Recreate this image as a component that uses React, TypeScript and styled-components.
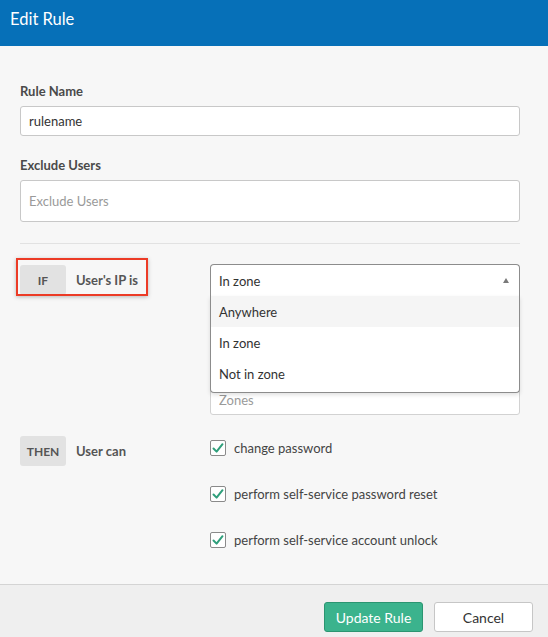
import styled, { createGlobalStyle } from "styled-components";

const GlobalStyle = createGlobalStyle`
  html, body {
    margin: 0;
    padding: 0;
    background: #f7f7f7;
    overflow: hidden;
  }
  * {
    box-sizing: border-box;
  }
  body {
    font-family: Lato, "Liberation Sans", Arial, sans-serif;
    color: #333333;
  }
`;

const options = ["Anywhere", "In zone", "Not in zone"];

const permissions = [
  "change password",
  "perform self-service password reset",
  "perform self-service account unlock",
];

const Check = () => (
  <svg width="12" height="12" viewBox="0 0 12 12">
    <polyline points="1.5,6.5 4.6,9.6 10.5,2.2" fill="none" stroke="#2f9f7b" strokeWidth="2" strokeLinecap="round" strokeLinejoin="round" />
  </svg>
);

export default function App() {
  return (
    <>
      <GlobalStyle />
      <Modal>
        <Header>Edit Rule</Header>
        <Body>
          <Field>
            <Label>Rule Name</Label>
            <TextInput defaultValue="rulename" />
          </Field>
          <Field>
            <Label>Exclude Users</Label>
            <TextInput placeholder="Exclude Users" tall />
          </Field>
          <Divider />

          <RuleRow>
            <Condition>
              <Badge>IF</Badge>
              <ConditionLabel>User's IP is</ConditionLabel>
              <Highlight />
            </Condition>
            <Controls>
              <Select>
                <span>In zone</span>
                <Caret />
                <Menu>
                  {options.map((o, i) => (
                    <Option key={o} active={i === 0}>{o}</Option>
                  ))}
                </Menu>
              </Select>
              <ZonesInput placeholder="Zones" />
            </Controls>
          </RuleRow>

          <RuleRow then>
            <Condition>
              <Badge>THEN</Badge>
              <ConditionLabel>User can</ConditionLabel>
            </Condition>
            <CheckList>
              {permissions.map((p) => (
                <CheckItem key={p}>
                  <Box><Check /></Box>
                  <span>{p}</span>
                </CheckItem>
              ))}
            </CheckList>
          </RuleRow>
        </Body>
        <Footer>
          <PrimaryButton>Update Rule</PrimaryButton>
          <SecondaryButton>Cancel</SecondaryButton>
        </Footer>
      </Modal>
    </>
  );
}

const Modal = styled.div`
  width: 548px;
  min-height: 637px;
  display: flex;
  flex-direction: column;
  background: #f7f7f7;
`;

const Header = styled.div`
  height: 46px;
  background: #0670b8;
  color: #ffffff;
  font-size: 16.5px;
  line-height: 38px;
  padding-left: 10px;
`;

const Body = styled.div`
  flex: 1;
  padding: 37px 28px 29px 20px;
`;

const Field = styled.div`
  display: flex;
  flex-direction: column;
  gap: 7px;
  margin-bottom: 21px;
`;

const Label = styled.label`
  font-size: 13px;
  line-height: 16px;
  font-weight: 700;
  color: #4a4a4a;
`;

const TextInput = styled.input<{ tall?: boolean }>`
  height: ${(p) => (p.tall ? "42px" : "30px")};
  width: 100%;
  border: 1px solid #c8c8c8;
  border-radius: 3px;
  background: #ffffff;
  padding: 0 8px;
  font-family: inherit;
  font-size: 13px;
  color: #333333;
  outline: none;
  &::placeholder {
    color: #9a9a9a;
  }
`;

const Divider = styled.hr`
  border: 0;
  border-top: 1px solid #e2e2e2;
  margin: 0 0 20px;
`;

const RuleRow = styled.div<{ then?: boolean }>`
  display: grid;
  grid-template-columns: 190px 1fr;
  align-items: start;
  margin-bottom: ${(p) => (p.then ? "0" : "20px")};
`;

const Condition = styled.div`
  position: relative;
  display: flex;
  align-items: center;
  gap: 10px;
  margin-top: 1px;
`;

const Badge = styled.span`
  width: 46px;
  height: 30px;
  display: flex;
  align-items: center;
  justify-content: center;
  background: #e2e2e2;
  border-radius: 3px;
  font-size: 12px;
  font-weight: 700;
  color: #555555;
`;

const ConditionLabel = styled.span`
  font-size: 13px;
  font-weight: 700;
  color: #555555;
`;

const Highlight = styled.div`
  position: absolute;
  left: -4px;
  top: -7px;
  width: 132px;
  height: 38px;
  border: 2px solid #ec3b26;
  box-shadow: 0 1px 4px rgba(0, 0, 0, 0.25);
  pointer-events: none;
`;

const Controls = styled.div`
  display: flex;
  flex-direction: column;
  gap: 89px;
`;

const Select = styled.div`
  position: relative;
  height: 32px;
  display: flex;
  align-items: center;
  justify-content: space-between;
  padding: 0 10px 0 8px;
  background: #ffffff;
  border: 1px solid #8c8c8c;
  border-bottom: 0;
  border-radius: 4px 4px 0 0;
  font-size: 13px;
  color: #333333;
  z-index: 2;
`;

const Caret = styled.span`
  width: 0;
  height: 0;
  border-left: 3.5px solid transparent;
  border-right: 3.5px solid transparent;
  border-bottom: 5px solid #7a7a7a;
`;

const Menu = styled.ul`
  position: absolute;
  top: 100%;
  left: -1px;
  right: -1px;
  margin: 0;
  padding: 0 0 3px;
  list-style: none;
  background: #ffffff;
  border: 1px solid #8c8c8c;
  border-top: 0;
  border-radius: 0 0 4px 4px;
  box-shadow: 0 2px 4px rgba(0, 0, 0, 0.12);
`;

const Option = styled.li<{ active?: boolean }>`
  height: 31px;
  display: flex;
  align-items: center;
  padding: 0 8px;
  background: ${(p) => (p.active ? "#f5f5f5" : "#ffffff")};
  font-size: 13px;
  color: #333333;
`;

const ZonesInput = styled(TextInput)`
  height: 30px;
  border-color: #d2d2d2;
`;

const CheckList = styled.div`
  display: flex;
  flex-direction: column;
  gap: 16px;
  margin-top: -2px;
`;

const CheckItem = styled.label`
  height: 30px;
  display: flex;
  align-items: center;
  gap: 8px;
  font-size: 13px;
  color: #444444;
`;

const Box = styled.span`
  width: 16px;
  height: 16px;
  display: flex;
  align-items: center;
  justify-content: center;
  background: #ffffff;
  border: 1px solid #8a8a8a;
  border-radius: 2px;
`;

const Footer = styled.div`
  display: flex;
  justify-content: flex-end;
  gap: 11px;
  padding: 17px 15px 17px;
  background: #efefef;
  border-top: 1px solid #d4d4d4;
`;

const Button = styled.button`
  width: 99px;
  height: 30px;
  border-radius: 3px;
  font-family: inherit;
  font-size: 14px;
  cursor: pointer;
`;

const PrimaryButton = styled(Button)`
  background: #3bb38d;
  border: 1px solid #2b9571;
  color: #ffffff;
`;

const SecondaryButton = styled(Button)`
  background: #ffffff;
  border: 1px solid #c6c6c6;
  color: #333333;
`;
